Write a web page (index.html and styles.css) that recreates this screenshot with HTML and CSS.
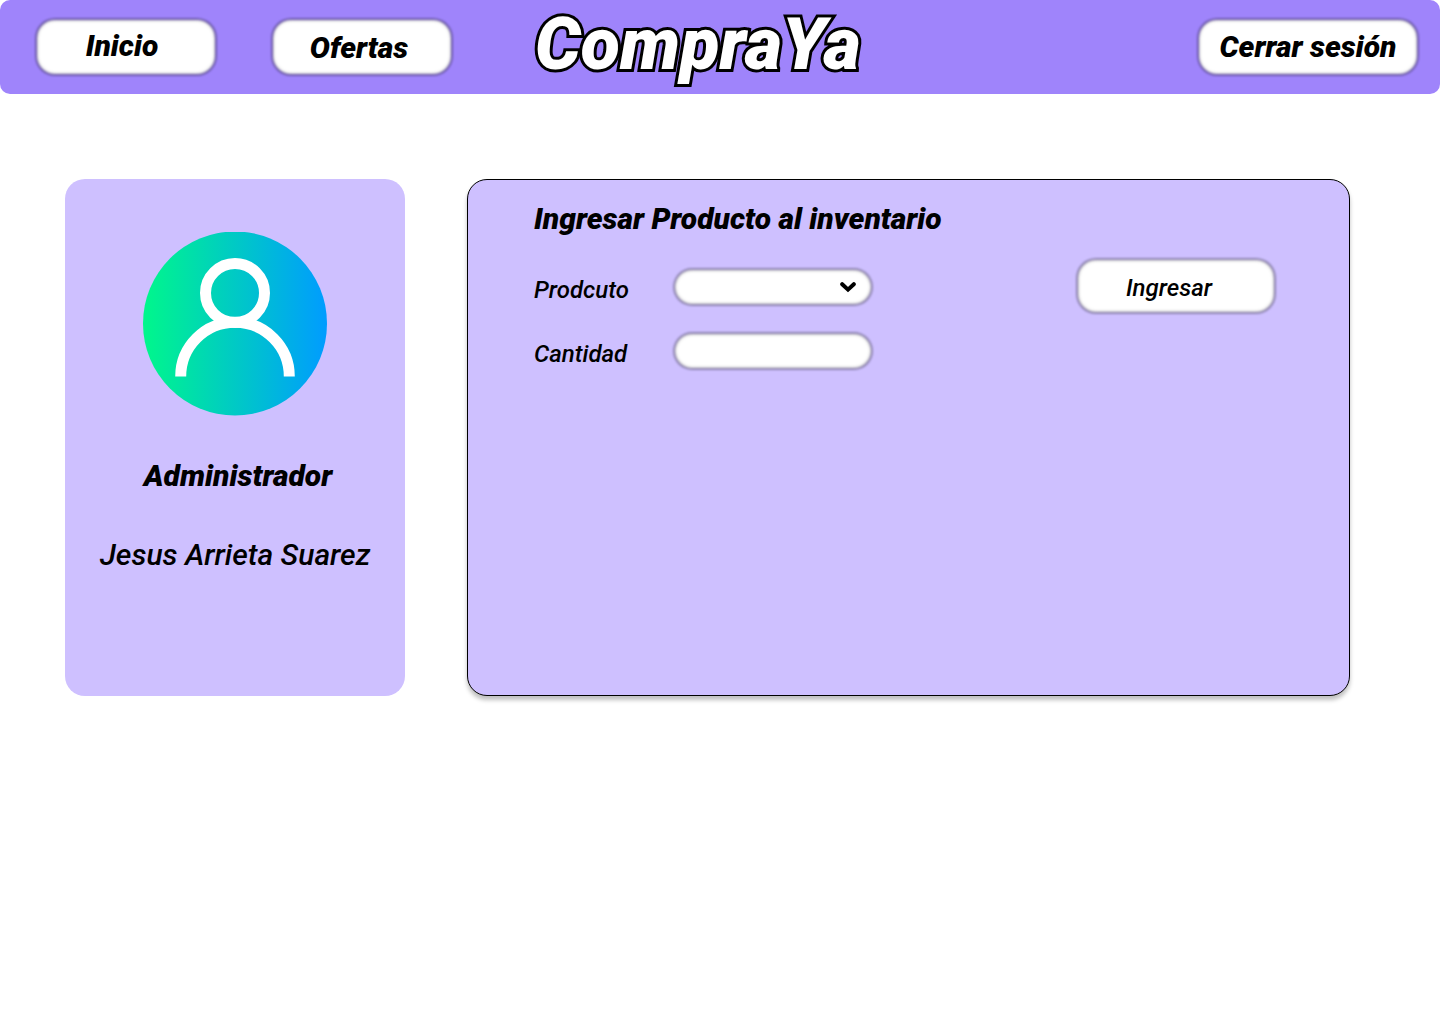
FILE: index.html
```html
<!DOCTYPE html>
<html lang="es">
<head>
  <meta charset="utf-8">
  <meta name="viewport" content="width=device-width, initial-scale=1">
  <title>CompraYa - Inventario</title>
  <link rel="stylesheet" href="styles.css">
</head>
<body>
  <header class="topbar">
    <nav class="nav">
      <a class="soft nav-link" href="#inicio">Inicio</a>
      <a class="soft nav-link nav-link-offers" href="#ofertas">Ofertas</a>
    </nav>
    <div class="logo">CompraYa</div>
    <button class="soft logout" type="button">Cerrar sesión</button>
  </header>

  <main class="layout">
    <aside class="card profile">
      <svg class="avatar" viewBox="0 0 184 184" aria-hidden="true">
        <defs>
          <linearGradient id="avatar-fill" x1="0" y1="0" x2="1" y2="0">
            <stop offset="0" stop-color="#00f78b"/>
            <stop offset="1" stop-color="#009cff"/>
          </linearGradient>
        </defs>
        <ellipse cx="92" cy="91.500" rx="92" ry="92" fill="url(#avatar-fill)"/>
        <g fill="none" stroke="#fff" stroke-width="11">
          <circle cx="92" cy="61" r="29.500"/>
          <path d="M37.700 144.500a54.300 54.300 0 0 1 108.600 0"/>
        </g>
      </svg>
      <h2 class="role">Administrador</h2>
      <p class="person">Jesus Arrieta Suarez</p>
    </aside>

    <section class="card panel">
      <h1 class="title">Ingresar Producto al inventario</h1>
      <form class="form">
        <div class="fields">
          <label class="label" for="producto">Prodcuto</label>
          <div class="soft field">
            <select class="control" id="producto"><option></option></select>
            <svg class="chevron" viewBox="0 0 16 12" aria-hidden="true">
              <path d="M2.200 3.200 8 8.600l5.800-5.400" fill="none" stroke="#000" stroke-width="4" stroke-linecap="round"/>
            </svg>
          </div>
          <label class="label" for="cantidad">Cantidad</label>
          <div class="soft field">
            <input class="control" id="cantidad" type="text">
          </div>
        </div>
        <button class="soft submit" type="submit">Ingresar</button>
      </form>
    </section>
  </main>
</body>
</html>
```

FILE: styles.css
```css
* {
  box-sizing: border-box;
}

body {
  margin: 0;
  background: #fff;
  color: #000;
  font-family: Roboto, "Liberation Sans", sans-serif;
  font-style: italic;
}

.topbar {
  display: flex;
  align-items: center;
  min-height: 94px;
  padding: 0 21px 0 35px;
  border-radius: 10px;
  background: #9f84fb;
}

.nav {
  display: flex;
  gap: 54px;
}

/* White pill whose outlined edge is softened */
.soft {
  position: relative;
  z-index: 0;
  border: 0;
  background: none;
  color: inherit;
  font: inherit;
  text-decoration: none;
}

.soft::before {
  content: "";
  position: absolute;
  inset: 0;
  z-index: -1;
  border: 2px solid rgba(0, 0, 0, 0.3);
  border-radius: 20px;
  background: #fff padding-box;
  box-shadow: inset 0 0 3px rgba(0, 0, 0, 0.4);
  filter: blur(1px);
}

.nav-link,
.logout {
  display: flex;
  align-items: center;
  justify-content: center;
  height: 58px;
  padding: 0;
  font-size: 30px;
  font-weight: 900;
  line-height: 36px;
}

.nav-link {
  width: 182px;
  padding: 0 8px 2px 0;
}

.nav-link-offers {
  padding: 2px 6px 0 0;
}

.logo {
  margin-left: 82px;
  padding-bottom: 5px;
  color: #fff;
  font-size: 72px;
  font-weight: 900;
  line-height: 84px;
  -webkit-text-stroke: 6px #000;
  paint-order: stroke fill;
}

.logout {
  width: 222px;
  margin-left: auto;
}

.layout {
  display: flex;
  gap: 62px;
  padding: 85px 90px 40px 65px;
}

.card {
  min-height: 517px;
  border-radius: 20px;
  background: #cec0ff;
}

.profile {
  display: flex;
  flex: 0 0 340px;
  flex-direction: column;
  align-items: center;
  padding-top: 53px;
}

.avatar {
  width: 184px;
  height: 184px;
}

.role,
.title {
  margin: 0;
  font-size: 30px;
  font-weight: 900;
  line-height: 36px;
}

.role {
  margin-top: 42px;
  padding-left: 6px;
}

.person {
  margin: 43px 0 0;
  font-size: 30px;
  font-weight: 500;
  line-height: 36px;
}

.panel {
  flex: 1;
  padding: 21px 73px 40px 66px;
  border: 1px solid #000;
  box-shadow: 0 4px 4px rgba(0, 0, 0, 0.25);
}

.form {
  display: flex;
  align-items: flex-start;
  justify-content: space-between;
  padding-top: 21px;
  font-size: 24px;
  font-weight: 500;
}

.fields {
  display: grid;
  grid-template-columns: 139px 200px;
  gap: 26px 0;
  padding-top: 10px;
}

.label {
  padding-top: 6px;
  line-height: 32px;
}

.field {
  height: 38px;
}

.control {
  width: 100%;
  height: 100%;
  padding: 0 16px;
  border: 0;
  border-radius: 20px;
  outline: 0;
  appearance: none;
  background: transparent;
  color: inherit;
  font: inherit;
}

.chevron {
  position: absolute;
  top: 13px;
  right: 17px;
  width: 16px;
  height: 12px;
  pointer-events: none;
}

.submit {
  width: 200px;
  height: 56px;
  padding: 3px 14px 0 0;
}
```
